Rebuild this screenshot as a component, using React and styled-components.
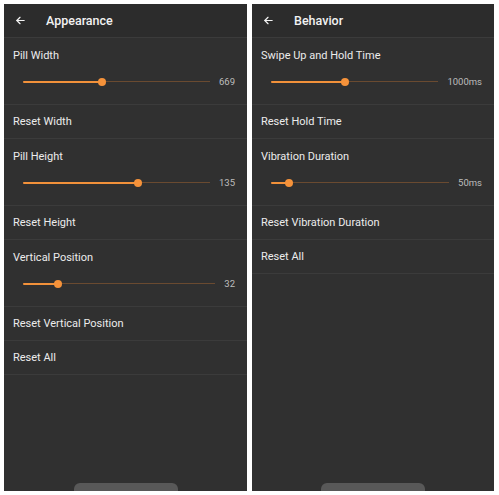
import React from "react";
import styled, { createGlobalStyle } from "styled-components";

const Global = createGlobalStyle`
  html, body { margin: 0; padding: 0; background: #ffffff; }
  body { font-family: Roboto, "Noto Sans", Arial, sans-serif; }
`;

const Page = styled.div`
  display: grid;
  grid-template-columns: 243px 242px;
  column-gap: 5px;
  padding: 4px;
  width: 499px;
  height: 495px;
  box-sizing: border-box;
`;

const Panel = styled.div`
  background: #303030;
  height: 487px;
  display: flex;
  flex-direction: column;
  overflow: hidden;
`;

const Header = styled.div`
  height: 33px;
  display: flex;
  align-items: center;
  background: #2c2c2c;
  border-bottom: 1px solid #3b3b3b;
  color: #f2f2f2;
`;

const Back = styled.div`
  width: 42px;
  padding-left: 11px;
  box-sizing: border-box;
  display: flex;
  align-items: center;
`;

const Title = styled.div`
  font-size: 12.5px;
  font-weight: 500;
`;

const SliderItem = styled.div`
  height: 67px;
  border-bottom: 1px solid #3b3b3b;
  display: flex;
  flex-direction: column;
  padding: 11px 12px 0 9px;
  box-sizing: border-box;
`;

const Label = styled.div`
  color: #ececec;
  font-size: 11px;
  line-height: 14px;
`;

const SliderRow = styled.div`
  display: flex;
  align-items: center;
  margin-top: 13px;
  padding-left: 10px;
  gap: 9px;
`;

const Track = styled.div`
  flex: 1;
  height: 8px;
  position: relative;
  display: flex;
  align-items: center;
`;

const Rail = styled.div`
  height: 1px;
  width: 100%;
  background: #6a4a30;
`;

const Active = styled.div`
  position: absolute;
  left: 0;
  top: 3px;
  height: 2px;
  border-radius: 1px;
  background: #f2913a;
`;

const Thumb = styled.div`
  position: absolute;
  top: 0;
  width: 8px;
  height: 8px;
  margin-left: -4px;
  border-radius: 50%;
  background: #f5923a;
`;

const Value = styled.div`
  color: #bdbdbd;
  font-size: 9.5px;
`;

const ResetItem = styled.div`
  height: 34px;
  box-sizing: border-box;
  border-bottom: 1px solid #3b3b3b;
  display: flex;
  align-items: center;
  padding-left: 9px;
  color: #ececec;
  font-size: 11px;
`;

const Spacer = styled.div`
  flex: 1;
`;

const HomePill = styled.div`
  align-self: center;
  width: 104px;
  height: 8px;
  border-radius: 6px 6px 0 0;
  background: #585858;
`;

const Arrow = () => (
  <svg width="11" height="11" viewBox="0 0 24 24" fill="none" stroke="#f2f2f2" strokeWidth="2.6" strokeLinecap="round" strokeLinejoin="round">
    <path d="M20 12H4" />
    <path d="M11 5l-7 7 7 7" />
  </svg>
);

const Slider = ({ label, value, frac }) => (
  <SliderItem>
    <Label>{label}</Label>
    <SliderRow>
      <Track>
        <Rail />
        <Active style={{ width: `${frac * 100}%` }} />
        <Thumb style={{ left: `${frac * 100}%` }} />
      </Track>
      <Value>{value}</Value>
    </SliderRow>
  </SliderItem>
);

const Screen = ({ title, children }) => (
  <Panel>
    <Header>
      <Back>
        <Arrow />
      </Back>
      <Title>{title}</Title>
    </Header>
    {children}
    <Spacer />
    <HomePill />
  </Panel>
);

export default function App() {
  return (
    <>
      <Global />
      <Page>
        <Screen title="Appearance">
          <Slider label="Pill Width" value="669" frac={0.42} />
          <ResetItem>Reset Width</ResetItem>
          <Slider label="Pill Height" value="135" frac={0.615} />
          <ResetItem>Reset Height</ResetItem>
          <Slider label="Vertical Position" value="32" frac={0.18} />
          <ResetItem>Reset Vertical Position</ResetItem>
          <ResetItem>Reset All</ResetItem>
        </Screen>
        <Screen title="Behavior">
          <Slider label="Swipe Up and Hold Time" value="1000ms" frac={0.445} />
          <ResetItem>Reset Hold Time</ResetItem>
          <Slider label="Vibration Duration" value="50ms" frac={0.1} />
          <ResetItem>Reset Vibration Duration</ResetItem>
          <ResetItem>Reset All</ResetItem>
        </Screen>
      </Page>
    </>
  );
}
